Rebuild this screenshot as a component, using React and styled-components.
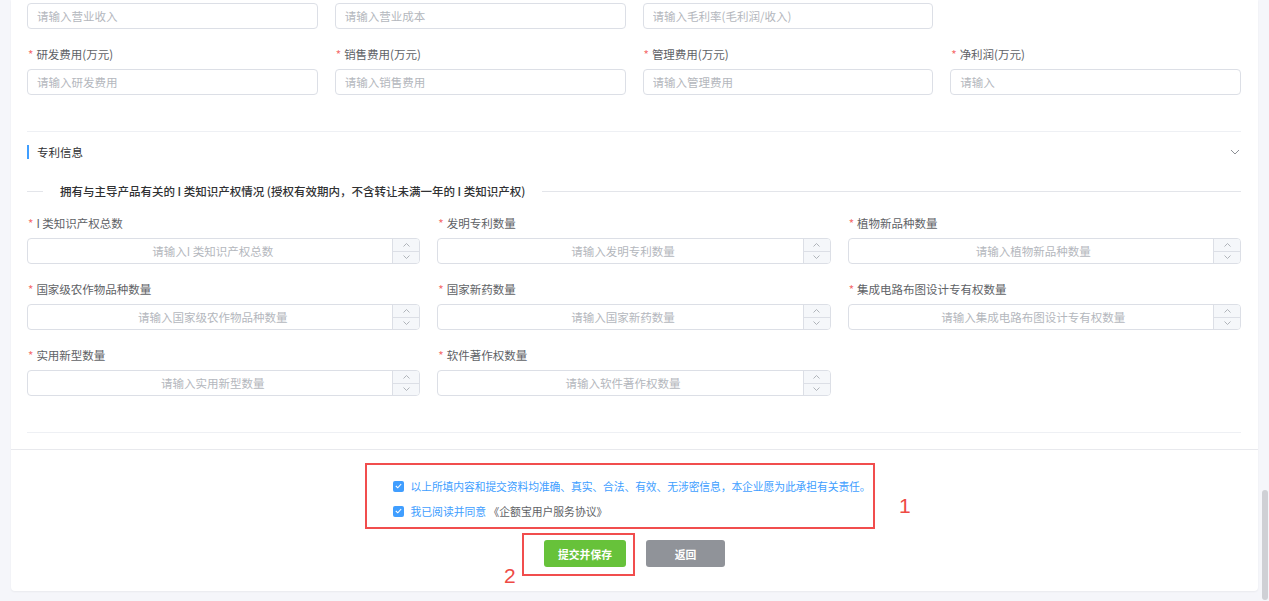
import React from "react";
import styled, { createGlobalStyle } from "styled-components";

const Global = createGlobalStyle`
  html, body { margin: 0; padding: 0; overflow: hidden; background: #f5f6fa; }
  body { font-family: "Noto Sans CJK SC", "Liberation Sans", sans-serif; }
  * { box-sizing: border-box; }
  input::placeholder { color: #b4b7bd; opacity: 1; }
`;

const Page = styled.div`
  height: 601px;
  padding: 0 11px 10px;
`;

const Card = styled.div`
  background: #fff;
  border-radius: 0 0 4px 4px;
  box-shadow: 0 1px 2px rgba(0, 0, 0, 0.05);
`;

const Body = styled.div`
  padding: 3px 17px 16px 16px;
`;

const Grid = styled.div`
  display: grid;
  grid-template-columns: repeat(${(p) => p.$cols}, 1fr);
  column-gap: 17px;
  padding-bottom: ${(p) => p.$pb || 0}px;
`;

const Item = styled.div`
  margin-bottom: 15px;
  min-width: 0;
`;

const Label = styled.div`
  height: 20px;
  line-height: 20px;
  margin-bottom: 5px;
  padding-left: 1px;
  font-size: 11.5px;
  color: #606266;
  white-space: nowrap;
`;

const Star = styled.span`
  color: #f56c6c;
  margin-right: 3px;
`;

const TextInput = styled.input`
  display: block;
  width: 100%;
  height: 26px;
  border: 1px solid #dcdfe6;
  border-radius: 4px;
  padding: 0 9px;
  font-family: inherit;
  font-size: 11.5px;
  color: #606266;
  outline: none;
  background: #fff;
`;

const NumberBox = styled.div`
  display: flex;
  height: 26px;
  border: 1px solid #dcdfe6;
  border-radius: 4px;
  overflow: hidden;
  background: #fff;
`;

const NumberField = styled.input`
  flex: 1;
  min-width: 0;
  border: none;
  outline: none;
  padding: 0 4px 0 9px;
  text-align: center;
  font-family: inherit;
  font-size: 11.5px;
  color: #606266;
  background: transparent;
`;

const Controls = styled.div`
  width: 27px;
  display: flex;
  flex-direction: column;
  border-left: 1px solid #dcdfe6;
`;

const Step = styled.div`
  flex: 1;
  display: flex;
  align-items: center;
  justify-content: center;
  background: #f5f7fa;
  & + & { border-top: 1px solid #dcdfe6; }
`;

const CollapseHeader = styled.div`
  height: 41px;
  border-top: 1px solid #eef0f4;
  display: flex;
  align-items: center;
  justify-content: space-between;
`;

const SectionTitle = styled.div`
  border-left: 2px solid #409eff;
  padding-left: 8px;
  line-height: 14px;
  font-size: 11.5px;
  color: #303133;
`;

const CollapseContent = styled.div`
  border-bottom: 1px solid #eef0f4;
  padding-bottom: 21px;
`;

const Divider = styled.div`
  display: flex;
  align-items: center;
  height: 20px;
  margin: 9px 0 12px;
`;

const DividerLine = styled.div`
  height: 1px;
  background: #e3e5ea;
  ${(p) => (p.$grow ? "flex: 1;" : `width: ${p.$w}px;`)}
`;

const DividerText = styled.span`
  margin: 0 17px;
  font-size: 11.5px;
  font-weight: 500;
  color: #303133;
  white-space: nowrap;
`;

const Footer = styled.div`
  position: relative;
  border-top: 1px solid #e8e9ed;
  padding: 26px 0 24px;
`;

const Agreements = styled.div`
  width: fit-content;
  margin: 0 auto;
  display: flex;
  flex-direction: column;
  gap: 5px;
  transform: translateX(-3px);
`;

const AgreeRow = styled.label`
  display: flex;
  align-items: center;
  gap: 7px;
  height: 20px;
  font-size: 10.8px;
  letter-spacing: ${(p) => p.$ls}px;
  color: #409eff;
  white-space: nowrap;
`;

const Box = styled.span`
  width: 11px;
  height: 11px;
  border-radius: 2px;
  background: #409eff;
  display: flex;
  align-items: center;
  justify-content: center;
  flex-shrink: 0;
`;

const Dark = styled.span`
  color: #606266;
`;

const Buttons = styled.div`
  display: flex;
  justify-content: center;
  gap: 20px;
  margin-top: 19px;
`;

const Button = styled.button`
  width: ${(p) => p.$w}px;
  height: 27px;
  border: none;
  border-radius: 3px;
  background: ${(p) => p.$bg};
  color: #fff;
  font-family: inherit;
  font-size: 10.8px;
  font-weight: 600;
  padding: 0;
`;

const Annot = styled.div`
  position: absolute;
  left: ${(p) => p.$x}px;
  top: ${(p) => p.$y}px;
  width: ${(p) => p.$w}px;
  height: ${(p) => p.$h}px;
  border: 2px solid #f14d4d;
  pointer-events: none;
`;

const AnnotNum = styled.span`
  position: absolute;
  left: ${(p) => p.$x}px;
  top: ${(p) => p.$y}px;
  font-family: "Liberation Sans", sans-serif;
  font-size: 21px;
  line-height: 21px;
  color: #ee4a45;
`;

const Thumb = styled.div`
  position: fixed;
  right: 1px;
  top: 490px;
  width: 6px;
  height: 110px;
  border-radius: 3px;
  background: #cfd0d5;
`;

const Chevron = ({ up }) => (
  <svg width="7" height="4" viewBox="0 0 7 4">
    <path
      d={up ? "M0.5 3.5 L3.5 0.5 L6.5 3.5" : "M0.5 0.5 L3.5 3.5 L6.5 0.5"}
      fill="none"
      stroke="#a8abb2"
      strokeWidth="0.9"
    />
  </svg>
);

const finance1 = ["请输入营业收入", "请输入营业成本", "请输入毛利率(毛利润/收入)"];
const finance2 = [
  ["研发费用(万元)", "请输入研发费用"],
  ["销售费用(万元)", "请输入销售费用"],
  ["管理费用(万元)", "请输入管理费用"],
  ["净利润(万元)", "请输入"],
];
const patents = [
  ["I 类知识产权总数", "请输入I 类知识产权总数"],
  ["发明专利数量", "请输入发明专利数量"],
  ["植物新品种数量", "请输入植物新品种数量"],
  ["国家级农作物品种数量", "请输入国家级农作物品种数量"],
  ["国家新药数量", "请输入国家新药数量"],
  ["集成电路布图设计专有权数量", "请输入集成电路布图设计专有权数量"],
  ["实用新型数量", "请输入实用新型数量"],
  ["软件著作权数量", "请输入软件著作权数量"],
];

const Check = () => (
  <Box>
    <svg width="7" height="6" viewBox="0 0 7 6">
      <path d="M0.8 3 L2.8 4.8 L6.2 1" fill="none" stroke="#fff" strokeWidth="1.1" />
    </svg>
  </Box>
);

export default function App() {
  return (
    <>
      <Global />
      <Page>
        <Card>
          <Body>
            <Grid $cols={4} $pb={21}>
              {finance1.map((p) => (
                <Item key={p}>
                  <TextInput placeholder={p} />
                </Item>
              ))}
              <Item />
              {finance2.map(([l, p]) => (
                <Item key={l}>
                  <Label><Star>*</Star>{l}</Label>
                  <TextInput placeholder={p} />
                </Item>
              ))}
            </Grid>
            <CollapseHeader>
              <SectionTitle>专利信息</SectionTitle>
              <svg width="10" height="6" viewBox="0 0 10 6" style={{ marginRight: 1 }}>
                <path d="M1 1 L5 5 L9 1" fill="none" stroke="#8d9096" strokeWidth="1" />
              </svg>
            </CollapseHeader>
            <CollapseContent>
              <Divider>
                <DividerLine $w={16} />
                <DividerText>
                  拥有与主导产品有关的 I 类知识产权情况 (授权有效期内，不含转让未满一年的 I 类知识产权)
                </DividerText>
                <DividerLine $grow />
              </Divider>
              <Grid $cols={3}>
                {patents.map(([l, p]) => (
                  <Item key={l}>
                    <Label><Star>*</Star>{l}</Label>
                    <NumberBox>
                      <NumberField placeholder={p} />
                      <Controls>
                        <Step><Chevron up /></Step>
                        <Step><Chevron /></Step>
                      </Controls>
                    </NumberBox>
                  </Item>
                ))}
              </Grid>
            </CollapseContent>
          </Body>
          <Footer>
            <Agreements>
              <AgreeRow $ls={-0.1}>
                <Check />
                以上所填内容和提交资料均准确、真实、合法、有效、无涉密信息，本企业愿为此承担有关责任。
              </AgreeRow>
              <AgreeRow $ls={0}>
                <Check />
                <span>我已阅读并同意 <Dark>《企额宝用户服务协议》</Dark></span>
              </AgreeRow>
            </Agreements>
            <Buttons>
              <Button $w={82} $bg="#67c23a">提交并保存</Button>
              <Button $w={79} $bg="#909399">返回</Button>
            </Buttons>
            <Annot $x={354} $y={13} $w={510} $h={66} />
            <Annot $x={511} $y={83} $w={113} $h={43} />
            <AnnotNum $x={888} $y={45}>1</AnnotNum>
            <AnnotNum $x={493} $y={115}>2</AnnotNum>
          </Footer>
        </Card>
      </Page>
      <Thumb />
    </>
  );
}
